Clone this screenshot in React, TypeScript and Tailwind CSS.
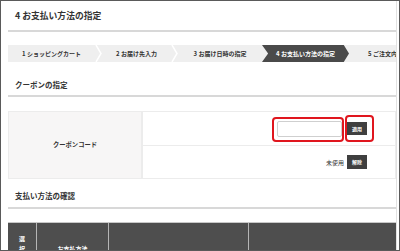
import React from "react";

const steps = [
  { label: "1 ショッピングカート", w: "w-[87px]" },
  { label: "2 お届け先入力", w: "w-[69px]" },
  { label: "3 お届け日時の指定", w: "w-[84px]" },
];

function Chevron() {
  return (
    <svg width="7" height="17" viewBox="0 0 7 17" className="shrink-0">
      <polyline points="1,0 6,8.5 1,17" fill="none" stroke="#ffffff" strokeWidth="1.5" />
    </svg>
  );
}

function Heading({ children, className = "" }: { children: React.ReactNode; className?: string }) {
  return (
    <div className={`border-b-2 border-[#d8d8d8] pl-[7px] text-[7.5px] font-bold leading-[10px] ${className}`}>
      {children}
    </div>
  );
}

export default function App() {
  return (
    <div className="w-[400px] h-[251px] overflow-hidden border border-[#5a5a5a] bg-white text-[#333] font-['Noto_Sans_CJK_JP','Noto_Sans',sans-serif]">
      <div className="ml-[7px] mr-[2px] h-full border-r border-[#e2e2e2]">
        <div className="h-[31px] border-b-2 border-[#d8d8d8] flex items-center pl-[7px] text-[8.8px] font-bold">
          4 お支払い方法の指定
        </div>

        <div className="mt-[13px] h-[17px] flex bg-[#efefef] text-[6px] font-bold leading-none">
          {steps.map((s, i) => (
            <React.Fragment key={i}>
              <div className={`${s.w} shrink-0 flex items-center justify-center whitespace-nowrap`}>{s.label}</div>
              {i < 2 && <Chevron />}
            </React.Fragment>
          ))}
          <div className="w-[87px] shrink-0 flex items-center justify-center whitespace-nowrap bg-[#4a4a4a] text-white [clip-path:polygon(0_0,94%_0,100%_50%,94%_100%,0_100%,7%_50%)]">
            4 お支払い方法の指定
          </div>
          <div className="flex-1 flex items-center pl-[19px] whitespace-nowrap overflow-hidden">5 ご注文内容の確認</div>
        </div>

        <Heading className="h-[35px] pt-[18px]">クーポンの指定</Heading>

        <div className="mt-[14px] h-[68px] flex border border-[#ececec]">
          <div className="w-[134px] shrink-0 bg-[#f7f6f6] border-r-2 border-[#ececec] flex items-center justify-center text-[6.3px] font-bold">
            クーポンコード
          </div>
          <div className="flex-1 flex flex-col">
            <div className="h-[34px] border-b border-[#ececec] flex items-center justify-end pr-[28px]">
              <div className="relative">
                <input className="block w-[65px] h-[16px] border border-[#cfcfcf] rounded-[2px] bg-white" />
                <span className="absolute left-[-5px] right-[-2px] top-[-4px] bottom-[-5px] border-2 border-[#e0161e] rounded-[4px]" />
              </div>
              <div className="relative ml-[5px]">
                <button className="w-[20px] h-[13px] bg-[#3f3f3f] text-white text-[5px] font-bold flex items-center justify-center">
                  適用
                </button>
                <span className="absolute left-[-2px] right-[-7px] top-[-7px] bottom-[-7px] border-2 border-[#e0161e] rounded-[4px]" />
              </div>
            </div>
            <div className="flex-1 flex items-center justify-end pr-[28px] gap-[3px]">
              <span className="text-[6px]">未使用</span>
              <button className="w-[20px] h-[14px] bg-[#3f3f3f] text-white text-[5px] font-bold flex items-center justify-center">
                解除
              </button>
            </div>
          </div>
        </div>

        <Heading className="h-[30px] pt-[12px]">支払い方法の確認</Heading>

        <div className="mt-[13px] h-[52px] flex bg-[#4e4e4e] border-t border-[#c8c8c8] text-white text-[6px] font-bold">
          <div className="w-[29px] shrink-0 border-r border-[#b5b5b5] flex flex-col items-center pt-[11px] leading-[10px]">
            <span>選</span>
            <span>択</span>
          </div>
          <div className="w-[72px] shrink-0 border-r border-[#b5b5b5] flex items-center justify-center">お支払方法</div>
          <div className="w-[140px] shrink-0 border-r border-[#b5b5b5]" />
          <div className="flex-1" />
        </div>
      </div>
    </div>
  );
}
